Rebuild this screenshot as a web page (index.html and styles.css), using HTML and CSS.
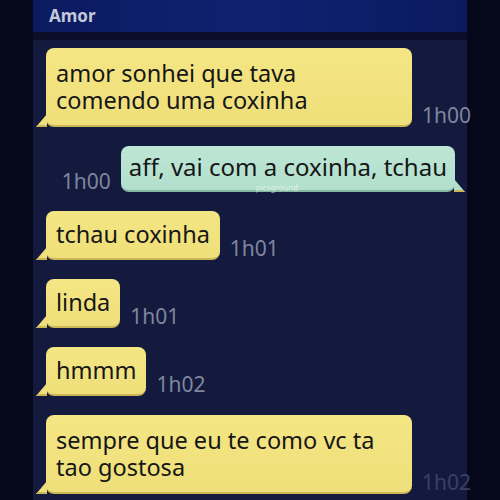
FILE: index.html
```html
<!DOCTYPE html>
<html lang="pt">
<head>
    <meta charset="UTF-8">
    <title>Amor</title>
    <link rel="stylesheet" href="styles.css">
</head>
<body>
    <div class="screen">
        <div class="title-bar">Amor</div>
        <div class="chat">
            <div class="msg in">
                <div class="bubble wide">amor sonhei que tava comendo uma coxinha</div>
                <span class="time">1h00</span>
            </div>
            <div class="msg out">
                <span class="time">1h00</span>
                <div class="bubble">aff, vai com a coxinha, tchau<span class="mark">picsground</span></div>
            </div>
            <div class="msg in">
                <div class="bubble">tchau coxinha</div>
                <span class="time">1h01</span>
            </div>
            <div class="msg in">
                <div class="bubble">linda</div>
                <span class="time">1h01</span>
            </div>
            <div class="msg in">
                <div class="bubble">hmmm</div>
                <span class="time">1h02</span>
            </div>
            <div class="msg in">
                <div class="bubble wide">sempre que eu te como vc ta tao gostosa</div>
                <span class="time faded">1h02</span>
            </div>
        </div>
    </div>
</body>
</html>
```

FILE: styles.css
```css
body {
    margin: 0;
    width: 500px;
    height: 500px;
    overflow: hidden;
    background-color: #05071a;
    font-family: "Noto Sans", "Open Sans", sans-serif;
}

.screen {
    margin-left: 33px;
    width: 434px;
    height: 500px;
    background-color: #141a3d;
}

.title-bar {
    height: 32px;
    line-height: 32px;
    padding-left: 16px;
    background: linear-gradient(90deg, #0b1a60 0%, #0f2170 50%, #0b1a60 100%);
    color: #c3c8d6;
    font-weight: bold;
    font-size: 17px;
    border-bottom: 8px solid #0b0e28;
}

.chat {
    display: flex;
    flex-direction: column;
    gap: 19px;
    padding: 8px 0 0 13px;
}

.msg {
    display: flex;
    align-items: flex-end;
}

.msg.out {
    justify-content: flex-end;
    padding-right: 12px;
}

.bubble {
    position: relative;
    flex-shrink: 0;
    background: linear-gradient(180deg, #f4e684 0%, #efdf7a 100%);
    color: #161616;
    font-size: 23.5px;
    line-height: 27px;
    padding: 10px 10px 10px 10px;
    border-radius: 8px;
    border-bottom: 2px solid #c9b656;
}

.bubble.wide {
    width: 346px;
    padding-top: 12px;
    padding-bottom: 11px;
}

.bubble::before {
    content: "";
    position: absolute;
    left: -10px;
    bottom: -2px;
    width: 11px;
    height: 11px;
    background: #efdf7a;
    clip-path: polygon(100% 0, 100% 100%, 0 100%);
    border-bottom: 2px solid #c9b656;
}

.out .bubble {
    background: linear-gradient(180deg, #bde6d5 0%, #b2dfcd 100%);
    border-bottom-color: #86b8a6;
    padding: 7px 8px 10px 8px;
    font-size: 24px;
}

.out .bubble::before {
    left: auto;
    right: -10px;
    background: #b2dfcd;
    clip-path: polygon(0 0, 100% 100%, 0 100%);
}

.mark {
    position: absolute;
    left: 135px;
    bottom: -2px;
    font-size: 8px;
    line-height: 8px;
    color: rgba(255, 255, 255, 0.55);
}

.time {
    color: #7f869f;
    font-size: 21px;
    line-height: 21px;
    margin: 0 0 1px 10px;
}

.out .time {
    margin: 0 10px 0 0;
}

.time.faded {
    color: #3a4066;
}
```
